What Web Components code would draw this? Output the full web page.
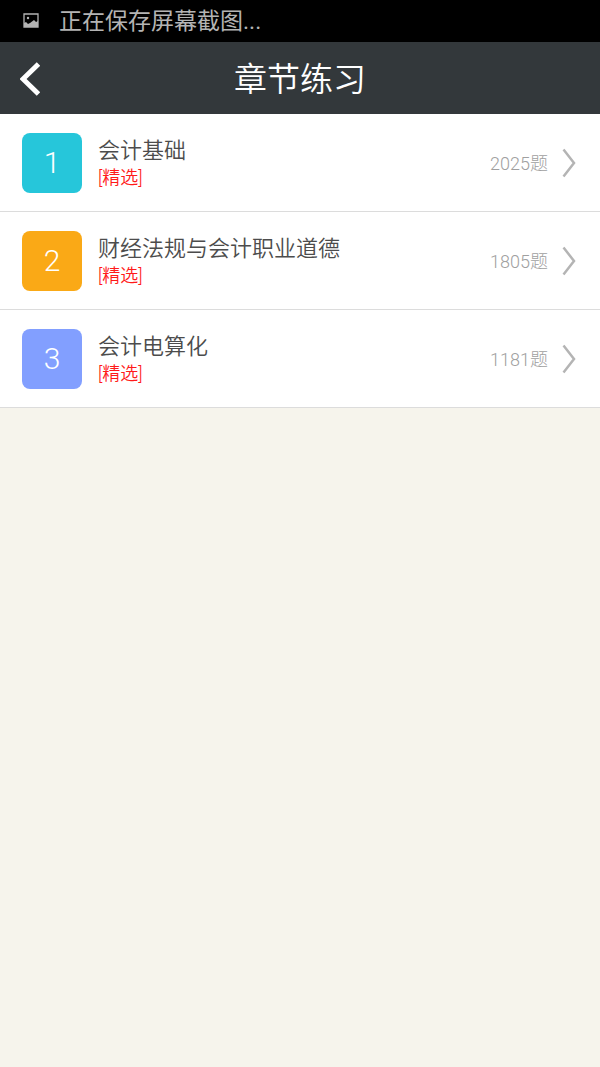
<!DOCTYPE html>
<html lang="zh-CN">
<head>
<meta charset="utf-8">
<meta name="viewport" content="width=device-width, initial-scale=1">
<title>章节练习</title>
<style>
	html, body {
		margin: 0;
		min-height: 100%;
		background: #f6f4ec;
		font-family: Roboto, "Noto Sans CJK SC", sans-serif;
		font-weight: 300;
	}
</style>
</head>
<body>

<status-bar>正在保存屏幕截图...</status-bar>
<title-bar>章节练习</title-bar>
<chapter-list>
	<chapter-item number="1" count="2025" color="#26c6da">会计基础<span slot="tag">[精选]</span></chapter-item>
	<chapter-item number="2" count="1805" color="#faa916">财经法规与会计职业道德<span slot="tag">[精选]</span></chapter-item>
	<chapter-item number="3" count="1181" color="#829fff">会计电算化<span slot="tag">[精选]</span></chapter-item>
</chapter-list>

<template id="status-bar">
	<style>
		:host {
			display: flex;
			align-items: center;
			gap: 20px;
			height: 42px;
			padding: 0 23px;
			background: #000;
			color: #b4b4b4;
			font-size: 23px;
			font-weight: 400;
			line-height: 36px;
		}
		svg {
			flex: none;
			width: 16px;
			height: 16px;
		}
		span {
			padding-top: 2px;
		}
	</style>
	<svg viewBox="0 0 16 16" aria-hidden="true">
		<path d="M1 1h14v13H1z" fill="none" stroke="#b4b4b4" stroke-width="1.300"/>
		<circle cx="5" cy="5" r="1.200" fill="#b4b4b4"/>
		<path d="M1 14v-4l2-1 2 2 2-1 4-3 2 2 2-1v6z" fill="#b4b4b4"/>
	</svg>
	<span><slot></slot></span>
</template>

<template id="title-bar">
	<style>
		:host {
			display: grid;
			grid-template-columns: 60px 1fr 60px;
			align-items: center;
			height: 72px;
			background: #33383b;
			color: #fff;
		}
		button {
			display: flex;
			align-items: center;
			height: 72px;
			padding: 0 20px;
			border: 0;
			background: none;
			color: inherit;
		}
		svg {
			flex: none;
			width: 20px;
			height: 34px;
		}
		h1 {
			margin: 0;
			padding-top: 2px;
			font-size: 33px;
			font-weight: 350;
			line-height: 72px;
			text-align: center;
		}
	</style>
	<button type="button" aria-label="返回">
		<svg viewBox="0 0 20 34" aria-hidden="true">
			<path d="M18.500 2L3 17l15.500 15" fill="none" stroke="currentColor" stroke-width="5"/>
		</svg>
	</button>
	<h1><slot></slot></h1>
</template>

<template id="chapter-list">
	<style>
		:host {
			display: block;
			background: #fff;
		}
	</style>
	<slot></slot>
</template>

<template id="chapter-item">
	<style>
		:host {
			display: block;
			border-bottom: 1px solid #dcdcdc;
		}
		a {
			display: flex;
			align-items: center;
			min-height: 97px;
			padding: 0 24px 0 22px;
			color: #4c4c4c;
			text-decoration: none;
		}
		.badge {
			flex: none;
			width: 60px;
			border-radius: 8px;
			color: #fff;
			font-size: 30px;
			line-height: 60px;
			text-align: center;
		}
		.text {
			flex: 1;
			min-width: 0;
			padding: 2px 16px 0;
			font-weight: 350;
		}
		.name {
			font-size: 22px;
			line-height: 28px;
		}
		.tag {
			color: #ff1a1a;
			font-size: 18px;
			line-height: 26px;
		}
		.count {
			padding-bottom: 2px;
			color: #a0a0a0;
			font-size: 18px;
		}
		svg {
			flex: none;
			width: 14px;
			height: 30px;
			margin-left: 14px;
		}
	</style>
	<a href="#">
		<div class="badge"></div>
		<div class="text">
			<div class="name"><slot></slot></div>
			<div class="tag"><slot name="tag"></slot></div>
		</div>
		<div class="count"></div>
		<svg viewBox="0 0 14 30" aria-hidden="true">
			<path d="M1.500 1.500L12 15 1.500 28.500" fill="none" stroke="#b4b4b4" stroke-width="2.500"/>
		</svg>
	</a>
</template>

<script>
	(function(window, document) {

		// Clones the <template> with the given id into an open shadow root
		function stamp(host, id) {
			var root = host.attachShadow({mode: 'open'});
			root.appendChild(document.importNode(document.getElementById(id).content, true));
			return root;
		}

		class StatusBar extends HTMLElement {
			constructor() {
				super();
				stamp(this, 'status-bar');
			}
		}

		class TitleBar extends HTMLElement {
			constructor() {
				super();
				stamp(this, 'title-bar');
				this.shadowRoot.querySelector('button').addEventListener('click', function() {
					window.history.back();
				});
			}
		}

		class ChapterList extends HTMLElement {
			constructor() {
				super();
				stamp(this, 'chapter-list');
			}
		}

		class ChapterItem extends HTMLElement {
			static get observedAttributes() {
				return ['number', 'count', 'color'];
			}

			constructor() {
				super();
				stamp(this, 'chapter-item');
			}

			connectedCallback() {
				this.update();
			}

			attributeChangedCallback() {
				this.update();
			}

			update() {
				var badge = this.shadowRoot.querySelector('.badge');
				badge.textContent = this.getAttribute('number');
				badge.style.backgroundColor = this.getAttribute('color');
				this.shadowRoot.querySelector('.count').textContent = this.getAttribute('count') + '题';
			}
		}

		window.customElements.define('status-bar', StatusBar);
		window.customElements.define('title-bar', TitleBar);
		window.customElements.define('chapter-list', ChapterList);
		window.customElements.define('chapter-item', ChapterItem);
	})(window, document);
</script>
</body>
</html>
